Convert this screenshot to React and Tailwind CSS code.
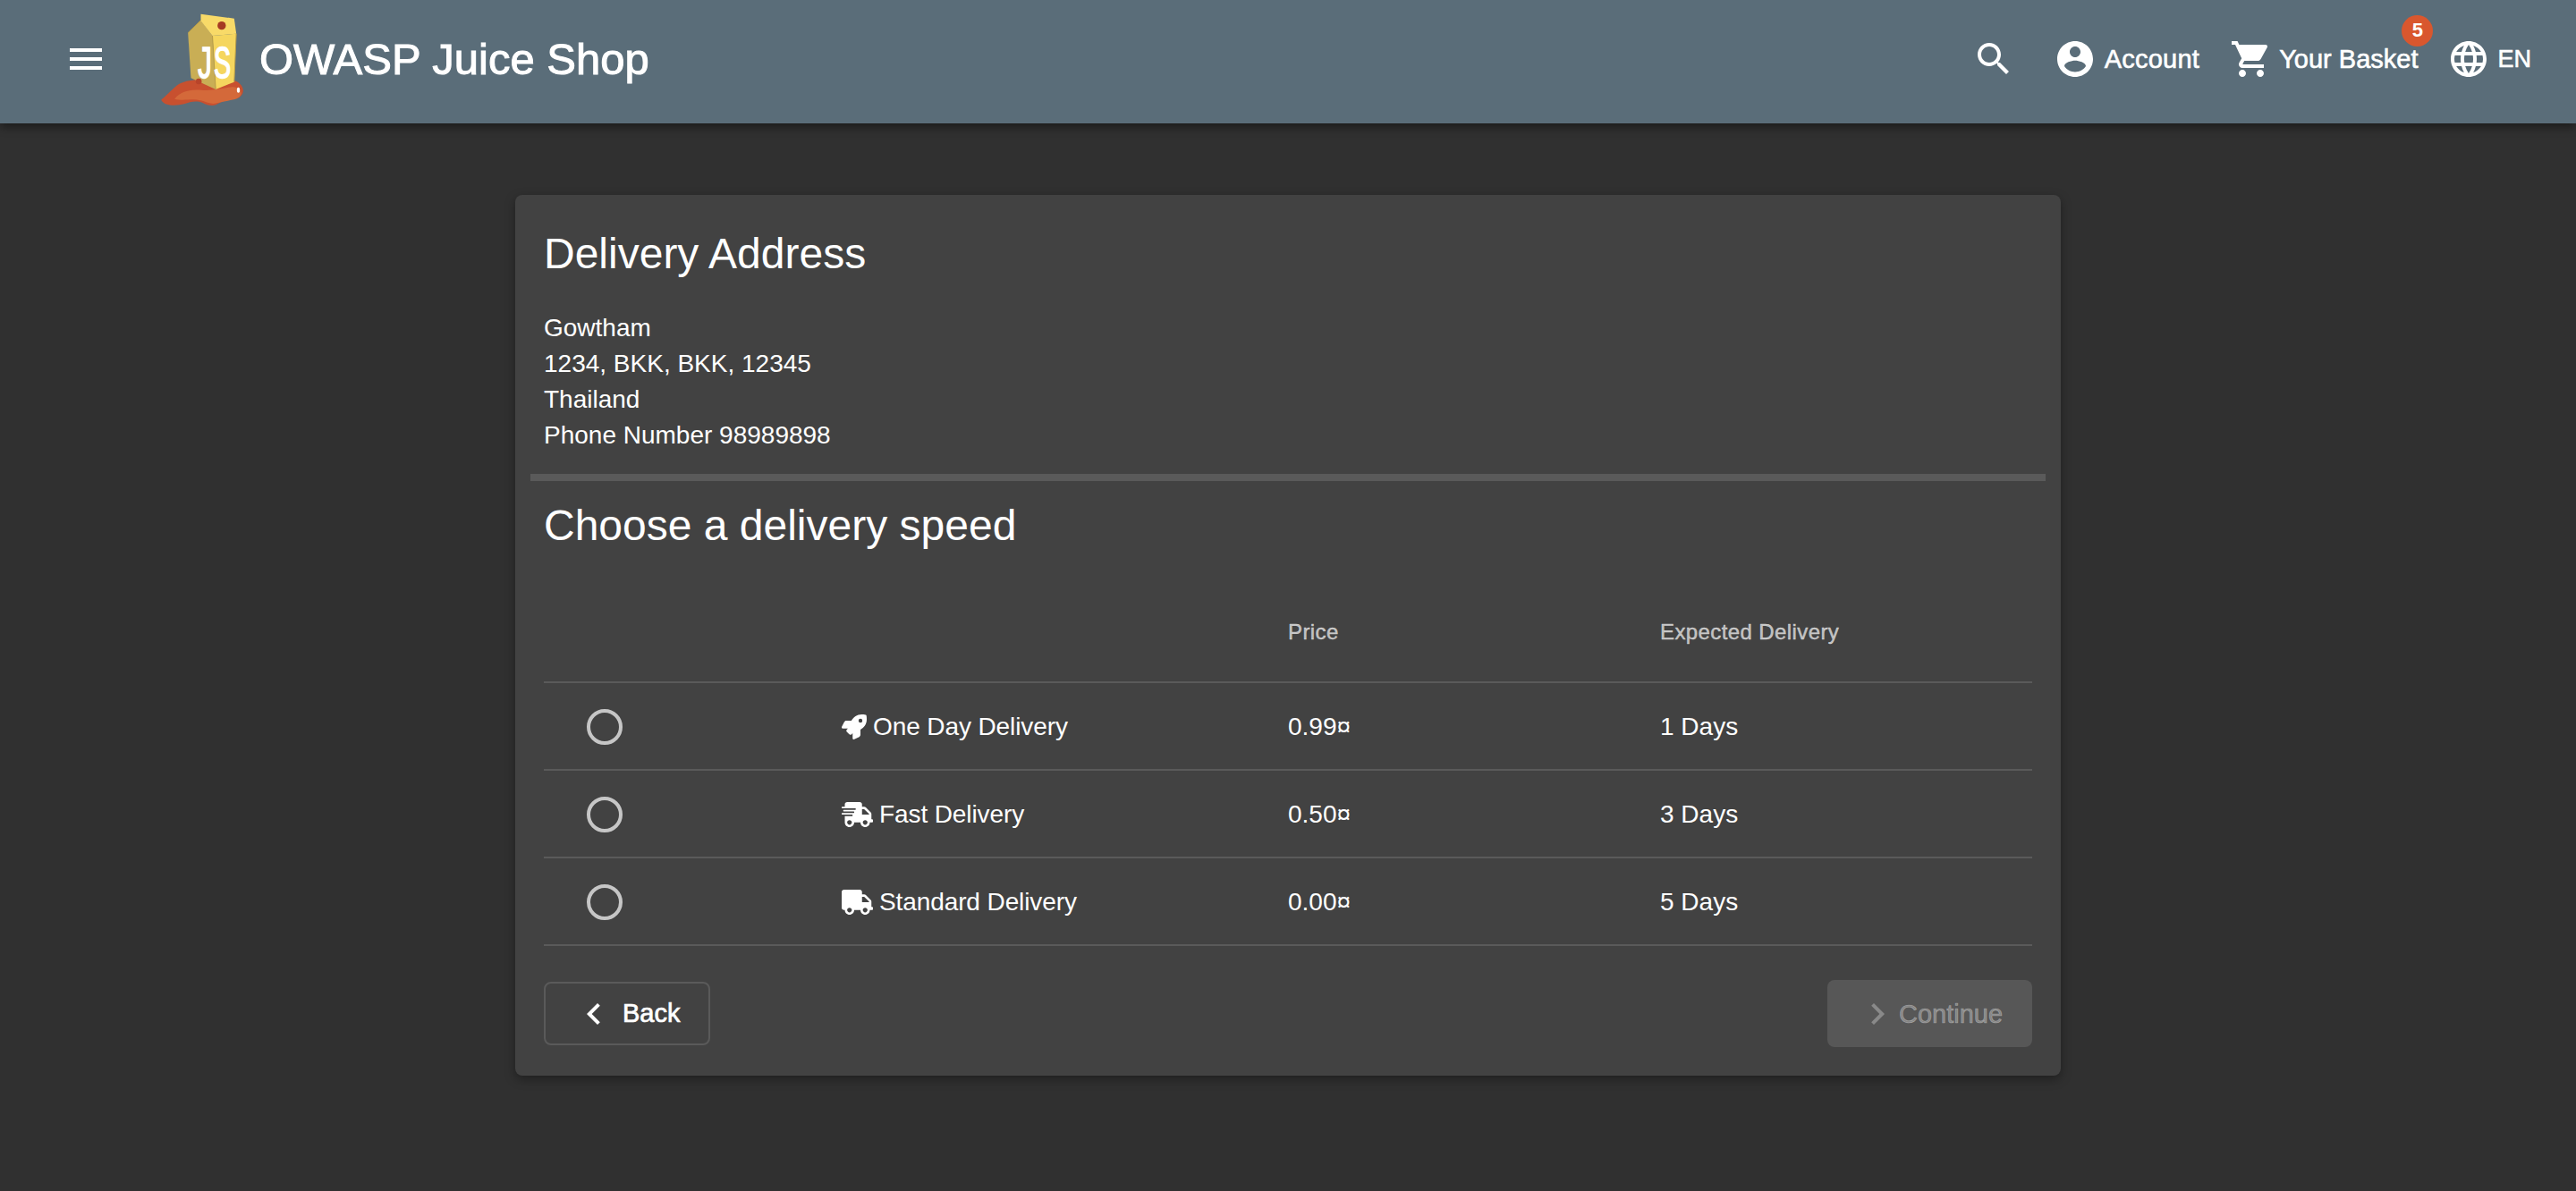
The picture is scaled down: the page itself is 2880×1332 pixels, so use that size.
import { FaRocket, FaShippingFast, FaTruck } from 'react-icons/fa';

const paths = {
  menu: 'M3 18h18v-2H3v2zm0-5h18v-2H3v2zm0-7v2h18V6H3z',
  search:
    'M15.5 14h-.79l-.28-.27C15.41 12.59 16 11.11 16 9.5 16 5.91 13.09 3 9.5 3S3 5.91 3 9.5 5.91 16 9.5 16c1.61 0 3.09-.59 4.23-1.57l.27.28v.79l5 4.99L20.49 19l-4.99-5zm-6 0C7.01 14 5 11.99 5 9.5S7.01 5 9.5 5 14 7.01 14 9.5 11.99 14 9.5 14z',
  account:
    'M12 2C6.48 2 2 6.48 2 12s4.48 10 10 10 10-4.48 10-10S17.52 2 12 2zm0 3c1.66 0 3 1.34 3 3s-1.34 3-3 3-3-1.34-3-3 1.34-3 3-3zm0 14.2c-2.5 0-4.71-1.28-6-3.22.03-1.99 4-3.08 6-3.08 1.99 0 5.97 1.09 6 3.08-1.29 1.94-3.5 3.22-6 3.22z',
  cart:
    'M7 18c-1.1 0-1.99.9-1.99 2S5.9 22 7 22s2-.9 2-2-.9-2-2-2zM1 2v2h2l3.6 7.59-1.35 2.45c-.16.28-.25.61-.25.96 0 1.1.9 2 2 2h12v-2H7.42c-.14 0-.25-.11-.25-.25l.03-.12.9-1.63h7.45c.75 0 1.41-.41 1.75-1.03l3.58-6.49c.08-.14.12-.31.12-.48 0-.55-.45-1-1-1H5.21l-.94-2H1zm16 16c-1.1 0-1.99.9-1.99 2s.89 2 1.99 2 2-.9 2-2-.9-2-2-2z',
  language:
    'M11.99 2C6.47 2 2 6.48 2 12s4.47 10 9.99 10C17.52 22 22 17.52 22 12S17.52 2 11.99 2zm6.93 6h-2.95c-.32-1.25-.78-2.45-1.38-3.56 1.84.63 3.37 1.91 4.33 3.56zM12 4.04c.83 1.2 1.48 2.53 1.91 3.96h-3.82c.43-1.43 1.08-2.76 1.91-3.96zM4.26 14C4.1 13.36 4 12.69 4 12s.1-1.36.26-2h3.38c-.08.66-.14 1.32-.14 2 0 .68.06 1.34.14 2H4.26zm.82 2h2.95c.32 1.25.78 2.45 1.38 3.56-1.84-.63-3.37-1.9-4.33-3.56zm2.95-8H5.08c.96-1.66 2.49-2.93 4.33-3.56C8.81 5.55 8.35 6.75 8.03 8zM12 19.96c-.83-1.2-1.48-2.53-1.91-3.96h3.82c-.43 1.43-1.08 2.76-1.91 3.96zM14.34 14H9.66c-.09-.66-.16-1.32-.16-2 0-.68.07-1.35.16-2h4.68c.09.65.16 1.32.16 2 0 .68-.07 1.34-.16 2zm.25 5.56c.6-1.11 1.06-2.31 1.38-3.56h2.95c-.96 1.65-2.49 2.93-4.33 3.56zM16.36 14c.08-.66.14-1.32.14-2 0-.68-.06-1.34-.14-2h3.38c.16.64.26 1.31.26 2s-.1 1.36-.26 2h-3.38z',
  before: 'M15.41 7.41L14 6l-6 6 6 6 1.41-1.41L10.83 12z',
  next: 'M10 6L8.59 7.41 13.17 12l-4.58 4.59L10 18l6-6z',
};

const MatIcon = ({ name, className = 'w-12 h-12 fill-white' }) => (
  <svg viewBox="0 0 24 24" className={`shrink-0 ${className}`}>
    <path d={paths[name]} />
  </svg>
);

const JuiceLogo = () => (
  <svg viewBox="60 35 275 315" className="w-[92px] h-[105px] shrink-0">
    <path
      d="M60 325c12-10 32-30 52-48 20-14 45-18 72-20l120 3c16 4 31 18 31 34 0 14-12 28-34 29-20 1-36 6-56 18-14 6-30 2-46-6-20-8-40-4-62 4-26 6-66 8-77-14z"
      fill="#c8502f"
    />
    <path
      d="M105 322c18-24 50-34 90-30 40 4 70-8 105-10 20 2 30 12 28 24-4 14-20 18-44 22-24 4-36 8-50 10-20-2-40-14-64-14-24 0-44 4-65-2z"
      fill="#d4693a"
    />
    <path d="M150 100L193 58 232 110 243 290 160 252z" fill="#c9ae55" />
    <path d="M193 37L305 52 312 103 232 110 193 60z" fill="#f8da68" />
    <path d="M232 110L312 103 305 265 243 290z" fill="#f5d65e" />
    <path d="M150 100L193 58M232 110L243 290M312 103L305 265" stroke="#b79c48" strokeWidth="3" fill="none" />
    <circle cx="263" cy="76" r="14" fill="#a63a23" />
    <text
      fontFamily="'Liberation Mono', monospace"
      fontWeight="400"
      fontSize="118"
      fill="#ffffff"
      stroke="#ffffff"
      strokeWidth="3"
      transform="translate(176 250) scale(0.84 1.34)"
    >
      JS
    </text>
    <circle cx="186" cy="263" r="10" fill="#b8442a" />
    <ellipse cx="319" cy="292" rx="5" ry="9" fill="#ffffff" />
  </svg>
);

const rows = [
  { Icon: FaRocket, iconSize: 'w-7 h-7', name: 'One Day Delivery', price: '0.99¤', days: '1 Days' },
  { Icon: FaShippingFast, iconSize: 'w-[35px] h-7', name: 'Fast Delivery', price: '0.50¤', days: '3 Days' },
  { Icon: FaTruck, iconSize: 'w-[35px] h-7', name: 'Standard Delivery', price: '0.00¤', days: '5 Days' },
];

const gridCols = 'grid grid-cols-[333px_499px_416px_416px] items-center';

export default function App() {
  return (
    <div className="min-h-screen bg-[#303030] text-white font-['Liberation_Sans',Arial,sans-serif]">
      <header className="relative h-[138px] bg-[#5a6d79] shadow-[0_4px_10px_rgba(0,0,0,0.45)] flex items-center pl-[72px] pr-[50px] pb-[6px]">
        <MatIcon name="menu" />
        <div className="ml-[60px] mb-[-2px]">
          <JuiceLogo />
        </div>
        <span className="ml-[18px] text-[49px] leading-none [-webkit-text-stroke:1px_white]">OWASP Juice Shop</span>
        <div className="ml-auto flex items-center text-[29px] [-webkit-text-stroke:0.6px_white]">
          <MatIcon name="search" />
          <MatIcon name="account" className="w-12 h-12 fill-white ml-[43px]" />
          <span className="ml-[9px] leading-none tracking-[0.25px]">Account</span>
          <MatIcon name="cart" className="w-12 h-12 fill-white ml-[34px]" />
          <span className="relative ml-[7px] leading-none">
            Your Basket
            <span className="absolute right-[-17px] top-[-35px] w-[35px] h-[35px] rounded-full bg-[#d9572e] flex items-center justify-center text-[22px] font-bold [-webkit-text-stroke:0]">
              5
            </span>
          </span>
          <MatIcon name="language" className="w-12 h-12 fill-white ml-[33px]" />
          <span className="ml-[8px] leading-none text-[27px]">EN</span>
        </div>
      </header>

      <main className="pt-20">
        <section className="mx-auto w-[1728px] bg-[#424242] rounded-lg shadow-[0_4px_12px_rgba(0,0,0,0.35)] pl-[17px] pr-[17px] pt-[34px] pb-8">
          <div className="px-[15px]">
            <h1 className="text-[48px] leading-[64px]">Delivery Address</h1>
            <div className="mt-[31px] text-[28px] leading-[40px]">
              <div>Gowtham</div>
              <div>1234, BKK, BKK, 12345</div>
              <div>Thailand</div>
              <div>Phone Number 98989898</div>
            </div>
          </div>
          <div className="mt-[23px] h-2 bg-[#5a5a5a]"></div>
          <div className="px-[15px]">
            <h2 className="mt-[18px] text-[48px] leading-[64px]">Choose a delivery speed</h2>
            <div className={`${gridCols} mt-[32px] h-[112px] border-b-2 border-[#5a5a5a] text-[24px] text-white/65 [-webkit-text-stroke:0.4px_rgba(255,255,255,0.65)] tracking-[0.4px]`}>
              <div></div>
              <div></div>
              <div>Price</div>
              <div>Expected Delivery</div>
            </div>
            {rows.map(({ Icon, iconSize, name, price, days }) => (
              <div key={name} className={`${gridCols} h-[98px] pt-[2px] border-b-2 border-[#5a5a5a] text-[28px]`}>
                <div className="pl-12">
                  <div className="w-10 h-10 rounded-full border-[4px] border-white/70"></div>
                </div>
                <div className="flex items-center gap-[7px]">
                  <Icon className={`${iconSize} shrink-0`} />
                  <span className="tracking-[-0.1px]">{name}</span>
                </div>
                <div>{price}</div>
                <div>{days}</div>
              </div>
            ))}
            <div className="mt-[38px] flex items-center justify-between">
              <button className="h-[71px] w-[186px] border-2 border-[#5a5a5a] rounded-lg flex items-center pl-[30px] text-[29px] [-webkit-text-stroke:0.7px_white]">
                <MatIcon name="before" />
                <span className="ml-[8px] mt-[1px]">Back</span>
              </button>
              <button className="h-[75px] w-[229px] bg-[#575757] rounded-lg flex items-center pl-8 text-[29px] text-white/30 [-webkit-text-stroke:0.7px_rgba(255,255,255,0.3)]">
                <MatIcon name="next" className="w-12 h-12 fill-white/30" />
                <span className="mt-[3px]">Continue</span>
              </button>
            </div>
          </div>
        </section>
      </main>
    </div>
  );
}
